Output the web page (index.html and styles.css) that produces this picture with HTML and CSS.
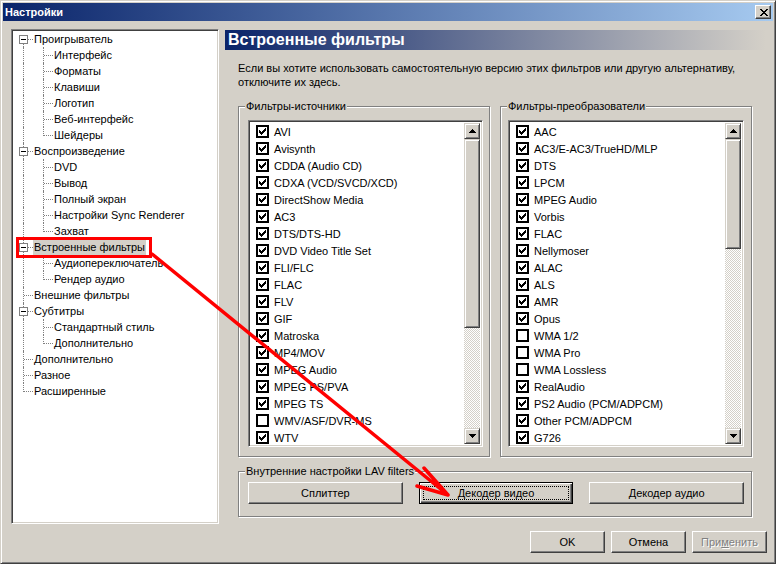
FILE: index.html
```html
<!DOCTYPE html>
<html lang="ru">
<head>
  <meta charset="UTF-8" />
  <title>Настройки</title>
  <link rel="stylesheet" href="styles.css">
</head>
<body>

  <svg class="defs" width="0" height="0">
    <symbol id="chk" viewBox="0 0 7 7">
      <rect x="6" y="0" width="1" height="1"/>
      <rect x="5" y="1" width="2" height="1"/>
      <rect x="0" y="2" width="1" height="1"/><rect x="4" y="2" width="3" height="1"/>
      <rect x="0" y="3" width="2" height="1"/><rect x="3" y="3" width="3" height="1"/>
      <rect x="0" y="4" width="5" height="1"/>
      <rect x="1" y="5" width="3" height="1"/>
      <rect x="2" y="6" width="1" height="1"/>
    </symbol>
    <symbol id="arr-up" viewBox="0 0 7 4">
      <rect x="3" y="0" width="1" height="1"/><rect x="2" y="1" width="3" height="1"/>
      <rect x="1" y="2" width="5" height="1"/><rect x="0" y="3" width="7" height="1"/>
    </symbol>
    <symbol id="arr-down" viewBox="0 0 7 4">
      <rect x="0" y="0" width="7" height="1"/><rect x="1" y="1" width="5" height="1"/>
      <rect x="2" y="2" width="3" height="1"/><rect x="3" y="3" width="1" height="1"/>
    </symbol>
  </svg>

  <div class="window">
    <div class="titlebar">
      <span class="title">Настройки</span>
      <span class="close">
        <svg width="8" height="7" viewBox="0 0 8 7" shape-rendering="crispEdges">
          <rect x="0" y="0" width="2" height="1"/><rect x="6" y="0" width="2" height="1"/>
          <rect x="1" y="1" width="2" height="1"/><rect x="5" y="1" width="2" height="1"/>
          <rect x="2" y="2" width="4" height="1"/>
          <rect x="3" y="3" width="2" height="1"/>
          <rect x="2" y="4" width="4" height="1"/>
          <rect x="1" y="5" width="2" height="1"/><rect x="5" y="5" width="2" height="1"/>
          <rect x="0" y="6" width="2" height="1"/><rect x="6" y="6" width="2" height="1"/>
        </svg>
      </span>
    </div>

    <div class="client">
      <div class="main">

        <div class="tree">
          <div class="node"><span class="cell first"><i class="box"></i></span><span class="label">Проигрыватель</span></div>
          <div class="node"><span class="cell pipe"></span><span class="cell tee"></span><span class="label">Интерфейс</span></div>
          <div class="node"><span class="cell pipe"></span><span class="cell tee"></span><span class="label">Форматы</span></div>
          <div class="node"><span class="cell pipe"></span><span class="cell tee"></span><span class="label">Клавиши</span></div>
          <div class="node"><span class="cell pipe"></span><span class="cell tee"></span><span class="label">Логотип</span></div>
          <div class="node"><span class="cell pipe"></span><span class="cell tee"></span><span class="label">Веб-интерфейс</span></div>
          <div class="node"><span class="cell pipe"></span><span class="cell last"></span><span class="label">Шейдеры</span></div>
          <div class="node"><span class="cell tee"><i class="box"></i></span><span class="label">Воспроизведение</span></div>
          <div class="node"><span class="cell pipe"></span><span class="cell tee"></span><span class="label">DVD</span></div>
          <div class="node"><span class="cell pipe"></span><span class="cell tee"></span><span class="label">Вывод</span></div>
          <div class="node"><span class="cell pipe"></span><span class="cell tee"></span><span class="label">Полный экран</span></div>
          <div class="node"><span class="cell pipe"></span><span class="cell tee"></span><span class="label">Настройки Sync Renderer</span></div>
          <div class="node"><span class="cell pipe"></span><span class="cell last"></span><span class="label">Захват</span></div>
          <div class="node"><span class="cell tee"><i class="box"></i></span><span class="label selected">Встроенные фильтры</span></div>
          <div class="node"><span class="cell pipe"></span><span class="cell tee"></span><span class="label">Аудиопереключатель</span></div>
          <div class="node"><span class="cell pipe"></span><span class="cell last"></span><span class="label">Рендер аудио</span></div>
          <div class="node"><span class="cell tee"></span><span class="label">Внешние фильтры</span></div>
          <div class="node"><span class="cell tee"><i class="box"></i></span><span class="label">Субтитры</span></div>
          <div class="node"><span class="cell pipe"></span><span class="cell tee"></span><span class="label">Стандартный стиль</span></div>
          <div class="node"><span class="cell pipe"></span><span class="cell last"></span><span class="label">Дополнительно</span></div>
          <div class="node"><span class="cell tee"></span><span class="label">Дополнительно</span></div>
          <div class="node"><span class="cell tee"></span><span class="label">Разное</span></div>
          <div class="node"><span class="cell last"></span><span class="label">Расширенные</span></div>
        </div>

        <div class="page">
          <div class="page-header">Встроенные фильтры</div>
          <p class="hint">Если вы хотите использовать самостоятельную версию этих фильтров или другую альтернативу,<br>отключите их здесь.</p>

          <div class="filters">
            <div class="group">
              <span class="caption">Фильтры-источники</span>
              <div class="checklist">
                <ul class="items" id="sourceList"></ul>
                <div class="scrollbar">
                  <span class="sb-btn"><svg width="7" height="4"><use href="#arr-up"/></svg></span>
                  <span class="sb-thumb" style="height:189px"></span>
                  <span class="sb-track"></span>
                  <span class="sb-btn"><svg width="7" height="4"><use href="#arr-down"/></svg></span>
                </div>
              </div>
            </div>

            <div class="group right">
              <span class="caption">Фильтры-преобразователи</span>
              <div class="checklist">
                <ul class="items" id="transformList"></ul>
                <div class="scrollbar">
                  <span class="sb-btn"><svg width="7" height="4"><use href="#arr-up"/></svg></span>
                  <span class="sb-thumb" style="height:110px"></span>
                  <span class="sb-track"></span>
                  <span class="sb-btn"><svg width="7" height="4"><use href="#arr-down"/></svg></span>
                </div>
              </div>
            </div>
          </div>

          <div class="group lav">
            <span class="caption">Внутренние настройки LAV filters</span>
            <div class="lav-buttons">
              <button class="btn">Сплиттер</button>
              <button class="btn default"><span class="focus">Декодер видео</span></button>
              <button class="btn">Декодер аудио</button>
            </div>
          </div>
        </div>

      </div>

      <div class="dialog-buttons">
        <button class="btn">OK</button>
        <button class="btn">Отмена</button>
        <button class="btn disabled">При<u>м</u>енить</button>
      </div>
    </div>

    <svg class="annotation" width="776" height="564" viewBox="0 0 776 564">
      <rect x="16.5" y="237.5" width="133" height="18" fill="none" stroke="#f00" stroke-width="3"/>
      <path d="M151 253 L447 494 M447 494 L423 467 M447 494 L416 485" fill="none" stroke="#f00" stroke-width="3.5" stroke-linecap="round"/>
    </svg>
  </div>

  <script>
    const sources = [
      ["AVI", 1], ["Avisynth", 1], ["CDDA (Audio CD)", 1], ["CDXA (VCD/SVCD/XCD)", 1],
      ["DirectShow Media", 1], ["AC3", 1], ["DTS/DTS-HD", 1], ["DVD Video Title Set", 1],
      ["FLI/FLC", 1], ["FLAC", 1], ["FLV", 1], ["GIF", 1], ["Matroska", 1], ["MP4/MOV", 1],
      ["MPEG Audio", 1], ["MPEG PS/PVA", 1], ["MPEG TS", 1], ["WMV/ASF/DVR-MS", 0], ["WTV", 1]
    ];

    const transforms = [
      ["AAC", 1], ["AC3/E-AC3/TrueHD/MLP", 1], ["DTS", 1], ["LPCM", 1], ["MPEG Audio", 1],
      ["Vorbis", 1], ["FLAC", 1], ["Nellymoser", 1], ["ALAC", 1], ["ALS", 1], ["AMR", 1],
      ["Opus", 1], ["WMA 1/2", 0], ["WMA Pro", 0], ["WMA Lossless", 0], ["RealAudio", 1],
      ["PS2 Audio (PCM/ADPCM)", 1], ["Other PCM/ADPCM", 1], ["G726", 1]
    ];

    function fillList(id, data) {
      const list = document.getElementById(id);
      data.forEach(([name, on]) => {
        const li = document.createElement("li");
        li.innerHTML = `
          <span class="checkbox">${on ? '<svg width="7" height="7"><use href="#chk"/></svg>' : ''}</span>
          <span>${name}</span>
        `;
        list.appendChild(li);
      });
    }

    fillList("sourceList", sources);
    fillList("transformList", transforms);
  </script>

</body>
</html>
```

FILE: styles.css
```css
* {
  box-sizing: border-box;
}

body {
  margin: 0;
  font-family: 'Liberation Sans', Arial, sans-serif;
  font-size: 11px;
  color: #000;
  background: #d4d0c8;
}

.defs {
  position: absolute;
}

.window {
  position: relative;
  width: 776px;
  height: 564px;
  padding: 2px;
  background: #d4d0c8;
  border: 1px solid;
  border-color: #d4d0c8 #404040 #404040 #d4d0c8;
  box-shadow: inset 1px 1px 0 #fff, inset -1px -1px 0 #808080;
}

.titlebar {
  height: 18px;
  display: flex;
  align-items: center;
  justify-content: space-between;
  padding: 0 2px;
  background: linear-gradient(to right, #0a246a, #a6caf0);
}

.title {
  color: #fff;
  font-weight: bold;
}

.close {
  width: 16px;
  height: 14px;
  display: flex;
  align-items: center;
  justify-content: center;
  padding: 0 0 0 1px;
  background: #d4d0c8;
  border: 1px solid;
  border-color: #fff #404040 #404040 #fff;
  box-shadow: inset -1px -1px 0 #808080;
}

.client {
  padding: 8px 6px 8px 8px;
}

.main {
  display: flex;
  gap: 6px;
  height: 495px;
}

/* sunken fields */
.tree, .checklist {
  background: #fff;
  border: 1px solid;
  border-color: #808080 #fff #fff #808080;
  box-shadow: inset 1px 1px 0 #404040, inset -1px -1px 0 #d4d0c8;
}

.tree {
  width: 208px;
  padding: 1px;
  overflow: hidden;
}

.node {
  display: flex;
  height: 16px;
  white-space: nowrap;
}

.cell {
  position: relative;
  width: 20px;
  height: 16px;
  flex: none;
}

.cell::before, .cell::after {
  content: "";
  position: absolute;
}

.pipe::before, .tee::before {
  left: 10px;
  top: 0;
  height: 16px;
  border-left: 1px dotted #808080;
}

.first::before {
  left: 10px;
  top: 8px;
  height: 8px;
  border-left: 1px dotted #808080;
}

.last::before {
  left: 10px;
  top: 0;
  height: 9px;
  border-left: 1px dotted #808080;
}

.tee::after, .first::after, .last::after {
  left: 11px;
  top: 8px;
  width: 9px;
  border-top: 1px dotted #808080;
}

.box {
  position: absolute;
  z-index: 1;
  left: 6px;
  top: 4px;
  width: 9px;
  height: 9px;
  border: 1px solid #808080;
  background: #fff;
}

.box::after {
  content: "";
  position: absolute;
  left: 1px;
  top: 3px;
  width: 5px;
  height: 1px;
  background: #000;
}

.label {
  padding: 0 1px;
  line-height: 16px;
}

.label.selected {
  background: #d4d0c8;
}

.page {
  flex: 1;
  margin-right: 1px;
  display: flex;
  flex-direction: column;
}

.page-header {
  margin-top: 1px;
  height: 20px;
  padding-left: 3px;
  line-height: 20px;
  font-size: 16px;
  font-weight: bold;
  color: #fff;
  background: linear-gradient(to right, #0a246a, #d4d0c8);
}

.hint {
  margin: 11px 0 0 13px;
  line-height: 14px;
}

.filters {
  margin-top: 17px;
  padding: 0 14px 0 13px;
  display: grid;
  grid-template-columns: 1fr 1fr;
  gap: 10px;
}

.group {
  position: relative;
  border: 1px solid #808080;
  box-shadow: 1px 1px 0 #fff, inset 1px 1px 0 #fff;
  padding: 13px 6px 9px 9px;
}

.group.right {
  padding-left: 7px;
  padding-right: 7px;
}

.caption {
  position: absolute;
  top: -7px;
  left: 6px;
  padding: 0 1px;
  line-height: 13px;
  background: #d4d0c8;
  white-space: nowrap;
}

.checklist {
  height: 327px;
  padding: 2px;
  display: flex;
}

.items {
  flex: 1;
  margin: 0;
  padding: 0;
  list-style: none;
}

.items li {
  height: 17px;
  display: flex;
  align-items: center;
  gap: 5px;
  padding-left: 5px;
  white-space: nowrap;
}

.checkbox {
  width: 13px;
  height: 13px;
  flex: none;
  border: 2px solid #000;
  background: #fff;
  padding: 1px;
  display: flex;
}

.checkbox svg {
  fill: #000;
}

.scrollbar {
  width: 16px;
  display: flex;
  flex-direction: column;
}

.sb-btn, .sb-thumb {
  flex: none;
  background: #d4d0c8;
  border: 1px solid;
  border-color: #d4d0c8 #404040 #404040 #d4d0c8;
  box-shadow: inset 1px 1px 0 #fff, inset -1px -1px 0 #808080;
}

.sb-btn {
  height: 16px;
  display: flex;
  align-items: center;
  justify-content: center;
}

.sb-btn svg {
  fill: #000;
}

.sb-track {
  flex: 1;
  background: repeating-conic-gradient(#fff 0 25%, #d4d0c8 0 50%) 0 0 / 2px 2px;
}

.lav {
  margin: 14px 14px 0 13px;
  padding: 10px 7px 12px 9px;
}

.lav-buttons {
  display: grid;
  grid-template-columns: repeat(3, 1fr);
  gap: 16px;
}

.btn {
  height: 22px;
  margin: 0;
  padding: 0;
  font: inherit;
  color: #000;
  background: #d4d0c8;
  border: 1px solid;
  border-color: #fff #404040 #404040 #fff;
  box-shadow: inset -1px -1px 0 #808080;
}

.btn.default {
  padding: 3px;
  border-color: #000;
  box-shadow: inset 1px 1px 0 #fff, inset -1px -1px 0 #404040, inset -2px -2px 0 #808080;
}

.focus {
  display: flex;
  height: 100%;
  align-items: center;
  justify-content: center;
  border: 1px dotted #000;
}

.btn.disabled {
  color: #808080;
  text-shadow: 1px 1px 0 #fff;
}

.dialog-buttons {
  margin-top: 7px;
  display: flex;
  justify-content: flex-end;
  gap: 6px;
}

.dialog-buttons .btn {
  width: 75px;
}

.annotation {
  position: absolute;
  left: 0;
  top: 0;
  pointer-events: none;
}
```
